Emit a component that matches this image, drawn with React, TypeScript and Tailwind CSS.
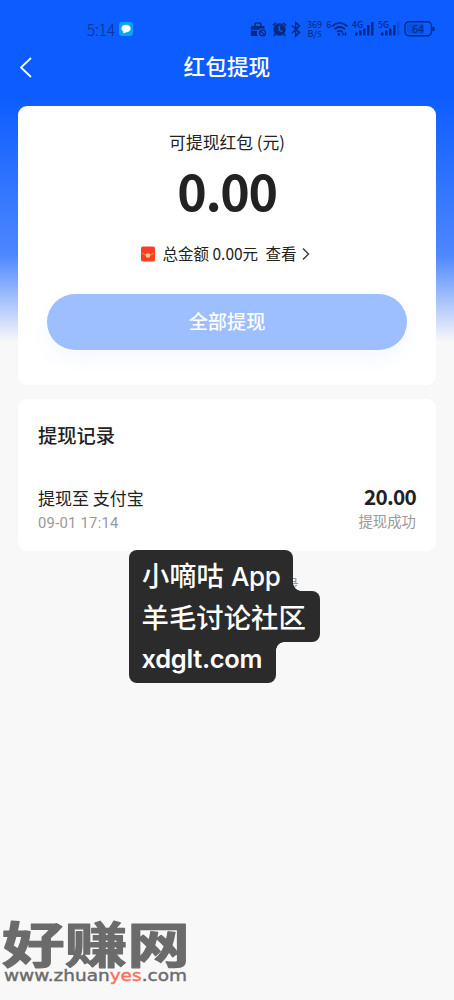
import { ReactNode } from "react";

const records = [
  { id: 1, target: "提现至 支付宝", time: "09-01 17:14", amount: "20.00", status: "提现成功" },
];

function SignalBars({ label, dim }: { label: string; dim?: boolean }) {
  return (
    <svg className="overflow-visible" width="22" height="18" viewBox="0 0 22 18" fill="currentColor">
      <text x="0" y="8" fontSize="9.500" fontWeight="500" textLength="11" lengthAdjust="spacingAndGlyphs">
        {label}
      </text>
      <rect x="3" y="12.500" width="2.500" height="3" />
      <rect x="7" y="10.500" width="2.500" height="5" />
      <rect x="11" y="8.500" width="2.500" height="7" />
      <rect x="15" y="5" width="2.500" height="10.500" />
      <rect x="19" y="2" width="2.500" height="13.500" opacity={dim ? 0.3 : 1} />
    </svg>
  );
}

function StatusBar() {
  return (
    <div className="flex h-[42px] items-start pl-[87px] pt-[20px] text-[#08318c]">
      <svg className="overflow-visible" width="29" height="18" viewBox="0 0 29 18" fill="currentColor">
        <text x="0" y="15.500" fontSize="16" fontWeight="300" textLength="28" lengthAdjust="spacingAndGlyphs">
          5:14
        </text>
      </svg>
      <svg className="ml-[3px] mt-[2px]" width="14" height="14" viewBox="0 0 14 14">
        <rect width="14" height="14" rx="3" fill="#08a4fb" />
        <ellipse cx="7" cy="6.600" rx="4.600" ry="3.900" fill="#fff" />
        <path d="M4.500 9l-.5 2.400 3-1.200z" fill="#fff" />
      </svg>

      <div className="ml-[117px] flex text-[#062a82]">
        <svg width="17" height="18" viewBox="0 0 17 18" fill="currentColor">
          <path d="M5 6V4.500Q5 3 6.500 3h3Q11 3 11 4.500V6" fill="none" stroke="currentColor" strokeWidth="1.500" />
          <path d="M1.500 6h13v3.200A4.500 4.500 0 0 0 8.500 9.800H.8V7Z" />
          <path d="M.8 10.800H7.500A4.500 4.500 0 0 0 8 16H1.500Q.8 16 .8 15Z" />
          <circle cx="12.500" cy="12.800" r="3" fill="none" stroke="currentColor" strokeWidth="1.300" />
          <path d="M10.500 10.800l4 4" stroke="currentColor" strokeWidth="1.200" />
        </svg>
        <svg className="ml-[5px]" width="15" height="18" viewBox="0 0 15 18">
          <circle cx="7.500" cy="9.500" r="6.200" fill="currentColor" />
          <path d="M.8 5.500L4 2.800M14.200 5.500L11 2.800M3.300 14l-1.500 2M11.700 14l1.500 2" stroke="currentColor" strokeWidth="1.500" />
          <path d="M7.300 6v4l3 1.700" fill="none" stroke="#0c5cff" strokeWidth="1.300" />
        </svg>
        <svg className="ml-[4px]" width="10" height="18" viewBox="0 0 10 18">
          <path d="M1 5.500l7.500 7L4.700 16V2.500l3.800 3.500L1 13" fill="none" stroke="currentColor" strokeWidth="1.500" />
        </svg>
        <svg className="ml-[6px] overflow-visible" width="16" height="18" viewBox="0 0 16 18" fill="currentColor">
          <text x="0" y="8" fontSize="9.500" textLength="15" lengthAdjust="spacingAndGlyphs">369</text>
          <text x="0.500" y="17" fontSize="9.500" textLength="14" lengthAdjust="spacingAndGlyphs">B/s</text>
        </svg>
        <svg className="ml-[4px] overflow-visible" width="22" height="18" viewBox="0 0 22 18">
          <text x="-0.500" y="7.500" fontSize="8.500" fontWeight="500" fill="currentColor">6</text>
          <path d="M5 6.300Q12.500-.5 20.500 6.300M7.500 9.200Q12.700 4.800 18 9.200M10 12Q12.700 9.800 15.500 12" fill="none" stroke="currentColor" strokeWidth="1.700" />
          <circle cx="12" cy="14.500" r="1.400" fill="currentColor" />
          <path d="M16 12.500v3M18.500 12.500v3" stroke="currentColor" strokeWidth="1.500" />
        </svg>
        <span className="ml-[3px]"><SignalBars label="4G" /></span>
        <span className="ml-[4px]"><SignalBars label="5G" dim /></span>
        <svg className="ml-[4px] overflow-visible" width="32" height="18" viewBox="0 0 32 18">
          <rect x="1" y="1.800" width="26.500" height="14" rx="4" fill="none" stroke="currentColor" strokeWidth="1.400" />
          <rect x="3" y="3.800" width="17" height="10" rx="2" fill="currentColor" opacity="0.250" />
          <path d="M29.500 7v4" stroke="currentColor" strokeWidth="2" />
          <text x="8" y="12.800" fontSize="11" fill="currentColor">64</text>
        </svg>
      </div>
    </div>
  );
}

function Card({ className, children }: { className: string; children: ReactNode }) {
  return <section className={`mx-[18px] rounded-[9px] bg-white ${className}`}>{children}</section>;
}

function RedPacket() {
  return (
    <svg width="14" height="16" viewBox="0 0 14 16">
      <rect y="0.500" width="14" height="15" rx="1.800" fill="#fb3d24" />
      <path d="M.5 7Q7 11 13.500 7" fill="none" stroke="#ff8a5c" strokeWidth="1" />
      <circle cx="7" cy="9.500" r="2.300" fill="#ffd28a" />
    </svg>
  );
}

// stepped label with an inner fillet where neighbouring lines differ in width
function Stamp() {
  return (
    <div className="absolute left-[129px] top-[550px] font-[Inter,'Noto_Sans_CJK_SC',sans-serif] font-medium text-white">
      <div className="relative h-[41px] w-[164px] rounded-t-[8px] bg-[#2b2b2b] pl-[13px] text-[27.300px] leading-[53px] whitespace-nowrap">
        小嘀咕
        <span className="ml-[7px] text-[26px] font-medium tracking-[-0.300px]">App</span>
        <i className="absolute -right-[8px] bottom-0 size-[8px] bg-[radial-gradient(circle_at_100%_0,transparent_7.500px,#2b2b2b_8px)]" />
      </div>
      <div className="h-[51px] w-[190.500px] rounded-r-[8px] bg-[#2b2b2b] pl-[12.500px] text-[27.400px] leading-[54px]">
        羊毛讨论社区
      </div>
      <div className="relative h-[41px] w-[146.500px] rounded-b-[8px] bg-[#2b2b2b] pl-[12.500px] text-[25.500px] leading-[33px] font-semibold tracking-[-0.300px]">
        xdglt.com
        <i className="absolute -right-[8px] top-0 size-[8px] bg-[radial-gradient(circle_at_100%_100%,transparent_7.500px,#2b2b2b_8px)]" />
      </div>
    </div>
  );
}

function SiteMark() {
  return (
    <svg className="absolute left-0 top-[915px] overflow-visible" width="200" height="75" viewBox="0 0 200 75" fill="#6b6b6b">
      <text x="2" y="48" fontSize="49" fontWeight="700" stroke="#6b6b6b" strokeWidth="1.200" strokeLinejoin="round" textLength="188" lengthAdjust="spacingAndGlyphs">
        好赚网
      </text>
      <text x="4" y="66" fontFamily="DejaVu Sans" fontSize="15.500" stroke="#6b6b6b" strokeWidth="0.400" textLength="183" lengthAdjust="spacingAndGlyphs">
        www.zhuan<tspan fill="#ff7058" stroke="#ff7058">yes</tspan>.com
      </text>
    </svg>
  );
}

export default function App() {
  return (
    <div className="relative h-[1000px] w-[454px] overflow-hidden bg-[#f8f8f8] bg-[linear-gradient(#0c5cff_0,#0c5cff_95px,#4d87ff_255px,#f8f8f8_342px)] font-['Noto_Sans_CJK_SC',sans-serif] text-[#222]">
      <StatusBar />

      <header className="flex h-[64px] items-start pl-[19px] pt-[12px] text-white">
        <svg className="mt-[2px]" width="14" height="22" viewBox="0 0 14 22">
          <path d="M12 2L2 11.500L12 21" fill="none" stroke="currentColor" strokeWidth="1.800" />
        </svg>
        <h1 className="ml-[150.500px] text-[21.700px] leading-[24px] font-medium">红包提现</h1>
      </header>

      <Card className="flex h-[279px] flex-col items-center">
        <p className="mt-[23px] text-[16.800px] leading-[26px]">可提现红包 (元)</p>
        <p className="mt-[4px] text-[50px] leading-[60px] font-bold tracking-[-1.300px]">0.00</p>
        <div className="mt-[23px] flex h-[24px] w-full items-center pl-[123px] text-[15.500px]">
          <RedPacket />
          <span className="-mt-px ml-[7.500px]">总金额 0.00元</span>
          <span className="-mt-px ml-[7.500px]">查看</span>
          <svg className="-mt-px ml-[5px]" width="8" height="13" viewBox="0 0 8 13">
            <path d="M1 1.500L6.500 7L1 12.500" fill="none" stroke="#333" strokeWidth="1.300" />
          </svg>
        </div>
        <button className="mt-[28px] h-[56px] w-[360px] rounded-full bg-[#9dbeff] pb-[2px] text-[19.200px] font-medium text-white shadow-[0_8px_20px_rgba(12,92,255,0.050)]">
          全部提现
        </button>
      </Card>

      <Card className="mt-[14px] h-[152px] px-[20px] pt-[22px]">
        <h2 className="text-[19.300px] leading-[28px] font-medium">提现记录</h2>
        {records.map((item) => (
          <div key={item.id} className="mt-[36px] flex justify-between">
            <div>
              <p className="text-[17px] leading-[26px]">{item.target}</p>
              <p className="font-[Roboto] text-[14.800px] leading-[24px] tracking-[0.250px] text-[#999]">{item.time}</p>
            </div>
            <div className="text-right">
              <p className="-mt-px text-[20.700px] leading-[24px] font-bold tracking-[-0.700px]">{item.amount}</p>
              <p className="pt-px text-[14.400px] leading-[24px] text-[#999]">{item.status}</p>
            </div>
          </div>
        ))}
      </Card>

      <p className="mt-[23px] pl-[155px] text-[14.400px] leading-[20px] text-[#999]">只展示最近一年的记录</p>

      <Stamp />
      <SiteMark />
    </div>
  );
}
